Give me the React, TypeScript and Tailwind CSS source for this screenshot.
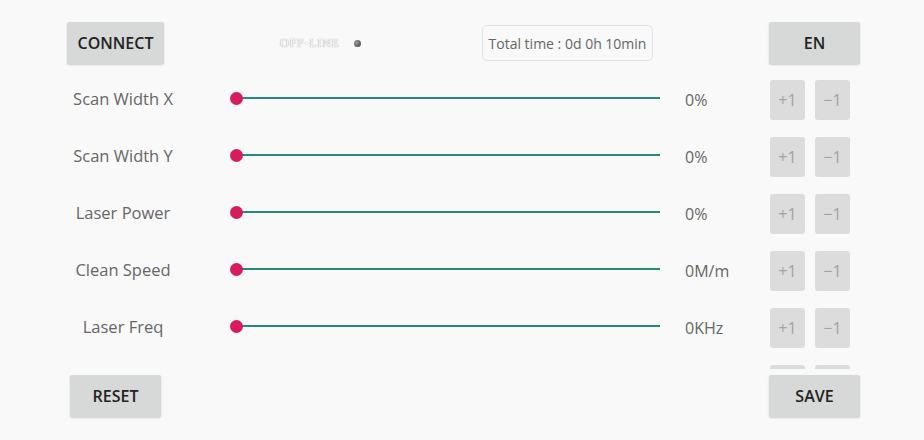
const rows = [
  { label: "Scan Width X", value: "0%" },
  { label: "Scan Width Y", value: "0%" },
  { label: "Laser Power", value: "0%" },
  { label: "Clean Speed", value: "0M/m" },
  { label: "Laser Freq", value: "0KHz" },
];

function BigButton({ children, wide }: { children: React.ReactNode; wide?: boolean }) {
  return (
    <button
      className={`flex h-[42px] items-center justify-center rounded-[2px] bg-[#d7d8d8] text-[16px] font-semibold text-[#222] shadow-[0_1px_2px_rgba(0,0,0,0.18)] ${
        wide ? "w-[97px]" : "w-[91px]"
      }`}
    >
      {children}
    </button>
  );
}

function StepButton({ children }: { children?: React.ReactNode }) {
  return (
    <button className="flex h-[40px] w-[35px] items-center justify-center rounded-[3px] bg-[#dcdcdc] text-[16px] text-[#a3a3a3]">
      {children}
    </button>
  );
}

function Slider() {
  return (
    <div className="relative flex h-[14px] w-[430px] -translate-y-[2px] items-center">
      <div className="ml-[6px] h-[2px] flex-1 bg-[#26897d]" />
      <div className="absolute left-0 top-[1px] h-[13px] w-[13px] rounded-full bg-[#d81b5e]" />
    </div>
  );
}

export default function App() {
  return (
    <div
      className="flex h-[440px] w-[924px] flex-col bg-[#f9f9f9]"
      style={{ fontFamily: "'Open Sans', 'Noto Sans', sans-serif" }}
    >
      {/* header */}
      <div className="mt-[22px] flex h-[42px] items-center">
        <div className="ml-[67px] w-[97px]">
          <BigButton wide>CONNECT</BigButton>
        </div>
        <div className="ml-[116px] flex w-[82px] items-center">
          <span
            className="w-[64px] text-[12px] tracking-[0.8px] text-white"
            style={{
              fontFamily: "'Liberation Serif', serif",
              textShadow: "0 0 1px #9a9a9a, 0 0 1px #b0b0b0",
            }}
          >
            OFF-LINE
          </span>
          <span className="ml-[10px] h-[7px] w-[7px] rounded-full bg-[radial-gradient(circle_at_35%_35%,#9a9a9a,#3c3c3c)]" />
        </div>
        <div className="ml-[120px] flex h-[36px] w-[171px] items-center justify-center rounded-[5px] border border-[#e2e2e2] bg-[#f9f9f9] text-[14px] text-[#666]">
          Total time : 0d 0h 10min
        </div>
        <div className="ml-[116px]">
          <BigButton>EN</BigButton>
        </div>
      </div>

      {/* body */}
      <div className="mt-[7px] flex h-[298px] overflow-hidden">
        <div className="flex flex-col">
          {rows.map((r) => (
            <div key={r.label} className="flex h-[57px] shrink-0 items-center">
              <div className="ml-[63px] w-[120px] text-center text-[16.5px] text-[#666]">
                {r.label}
              </div>
              <div className="ml-[47px]">
                <Slider />
              </div>
              <div className="ml-[25px] text-[16px] text-[#666]">{r.value}</div>
            </div>
          ))}
        </div>
        <div className="ml-auto mr-[74px] flex flex-col">
          {[0, 1, 2, 3, 4].map((i) => (
            <div key={i} className="flex h-[57px] shrink-0 items-center gap-[10px]">
              <StepButton>+1</StepButton>
              <StepButton>−1</StepButton>
            </div>
          ))}
          <div className="flex h-[57px] shrink-0 items-center gap-[10px]">
            <StepButton />
            <StepButton />
          </div>
        </div>
      </div>

      {/* footer */}
      <div className="mt-[6px] flex items-center">
        <div className="ml-[70px]">
          <BigButton>RESET</BigButton>
        </div>
        <div className="ml-auto mr-[64px]">
          <BigButton>SAVE</BigButton>
        </div>
      </div>
    </div>
  );
}
